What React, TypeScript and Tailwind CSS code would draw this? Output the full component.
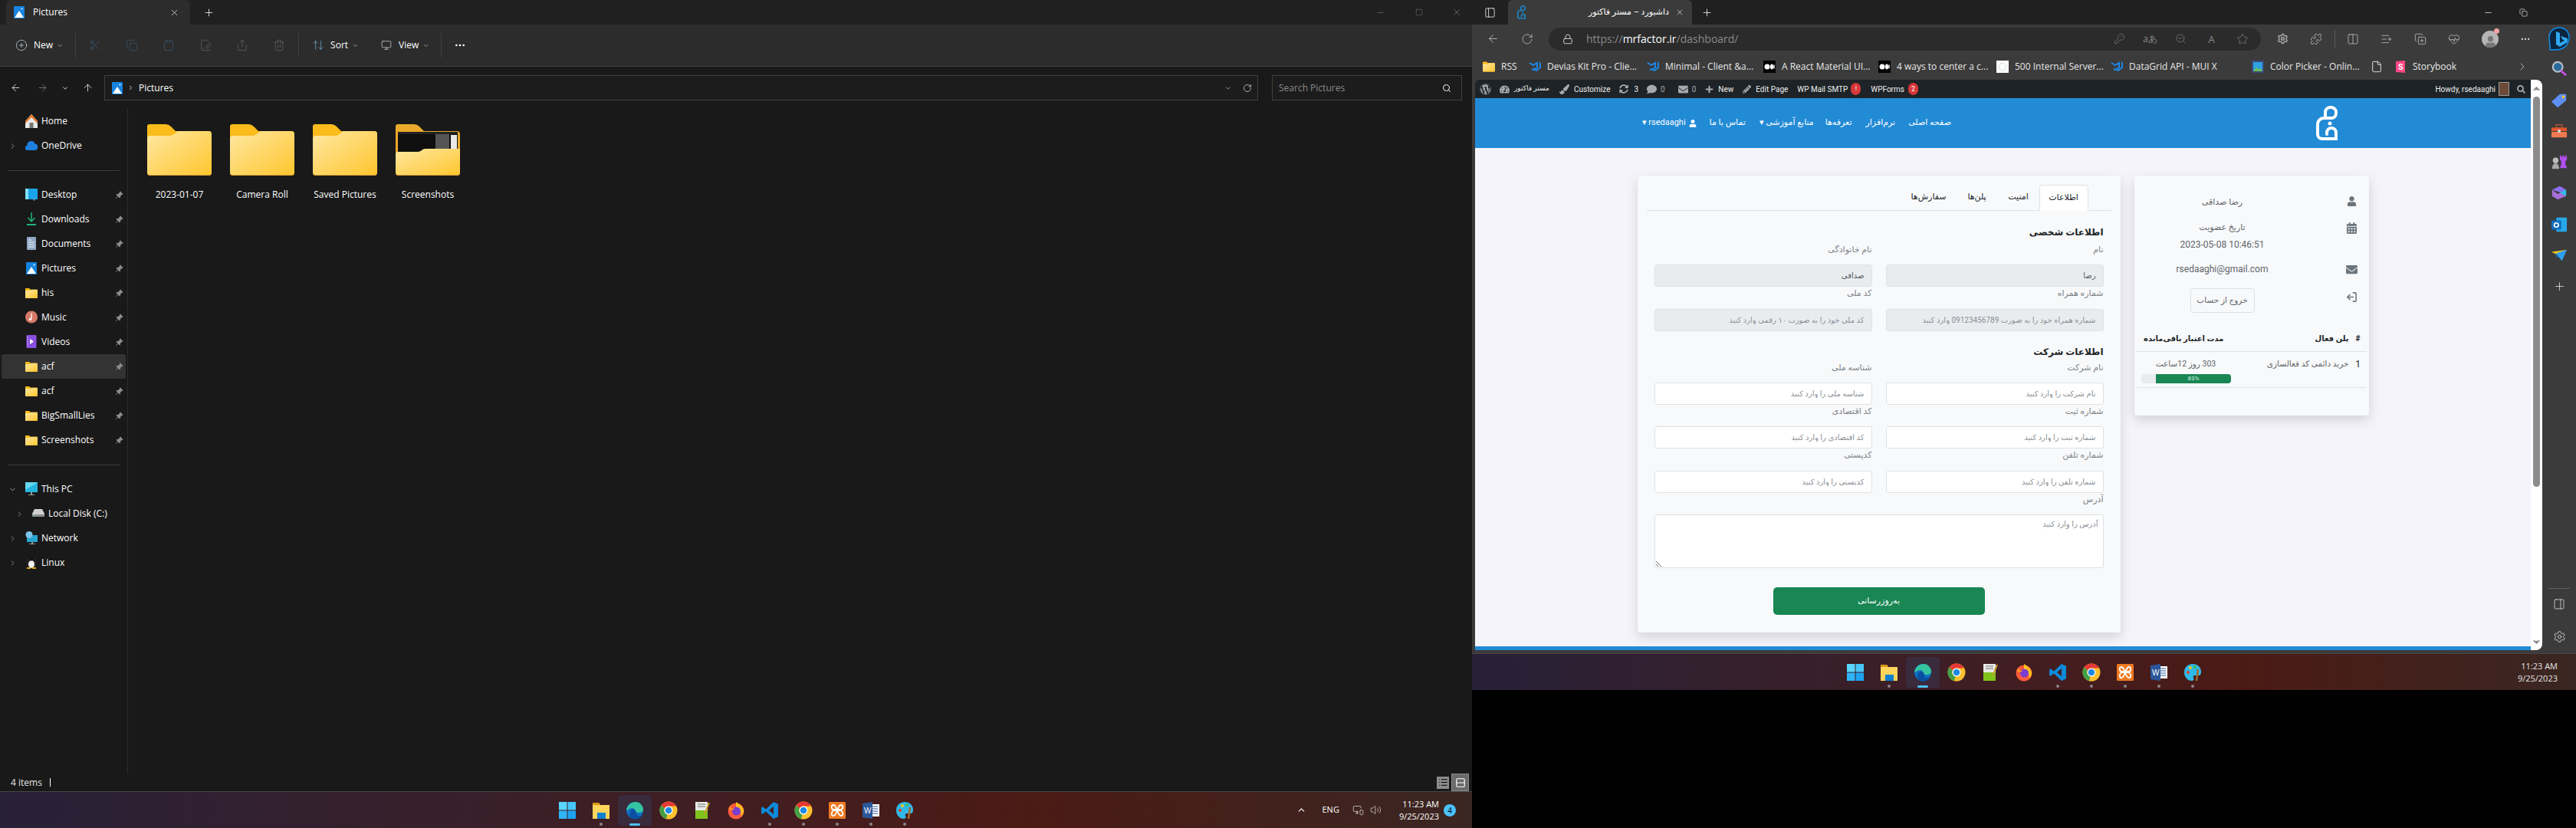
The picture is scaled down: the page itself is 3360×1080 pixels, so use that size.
import type { ReactNode } from "react";
import {
  ArrowLeft, ArrowRight, ArrowUp, ArrowUpDown, ChevronDown, ChevronRight, ChevronUp, Clipboard, Copy,
  FilePenLine, Lock, LogOut, Minus, MoreHorizontal, Plus, RotateCw, Scissors, Search, Settings, Share, Square, Star,
  Trash2, X, KeyRound, ZoomOut, Puzzle, Columns2, ListPlus, CopyPlus, HeartPulse, Volume2, MonitorSmartphone, File,
  PanelRight, Monitor, CirclePlus, List, Rows2,
} from "lucide-react";
import { BsPinAngleFill } from "react-icons/bs";
import {
  FaCalendarAlt, FaComment, FaEnvelope, FaPaintBrush, FaPencilAlt, FaPlus, FaSearch, FaSyncAlt, FaTachometerAlt,
  FaUser, FaWordpress,
} from "react-icons/fa";

const seg = "font-['Open_Sans','Noto_Sans',sans-serif]";
const fa = "font-['Roboto','DejaVu_Sans',sans-serif]";

function Folder({ className = "", preview = false }: { className?: string; preview?: boolean }) {
  return (
    <svg viewBox="0 0 84 67" className={className}>
      <defs>
        <linearGradient id="fold" x1="0" y1="0" x2="1" y2="1">
          <stop offset="0" stopColor="#ffe8a3" />
          <stop offset="1" stopColor="#ffc62e" />
        </linearGradient>
      </defs>
      <path d="M3 0H24q4 0 7 3l6 6H80q4 0 4 4V63q0 4-4 4H4q-4 0-4-4V3q0-3 3-3z" fill={preview ? "#e9a92a" : "#fbbb1a"} />
      <path d="M0 63h84q0 4-4 4H4q-4 0-4-4z" fill="#dfa43a" />
      {preview ? (
        <>
          <rect x="3" y="12" width="78" height="30" fill="#0f0f0f" />
          <rect x="52" y="12" width="18" height="30" fill="#555" />
          <rect x="72" y="14" width="8" height="28" fill="#e9e9e9" />
          <rect x="3" y="10" width="78" height="3" fill="#222" />
          <path d="M0 39q0-3 4-3H29q3 0 5-2t5-2H84V62q0 4-4 4H4q-4 0-4-4z" fill="url(#fold)" />
        </>
      ) : (
        <path d="M0 19q0-4 4-4H30q3 0 6-3t5-3H80q4 0 4 4V62q0 4-4 4H4q-4 0-4-4z" fill="url(#fold)" />
      )}
    </svg>
  );
}

function PicturesIcon({ className = "" }: { className?: string }) {
  return (
    <svg viewBox="0 0 14 16" className={className}>
      <rect width="14" height="16" rx="1" fill="#1583e0" />
      <circle cx="10.5" cy="3.5" r="1" fill="#fff" />
      <path d="M1 15 7 6l6 9z" fill="#fff" />
    </svg>
  );
}

function SideIcon({ name }: { name: string }) {
  if (name === "folder") return <Folder className="w-[16px] h-[13px]" />;
  if (name === "pictures") return <PicturesIcon className="w-[14px] h-[16px]" />;
  const paths: Record<string, ReactNode> = {
    home: (
      <>
        <path d="M8 0 0 9v9h16V9z" fill="#e8e8e8" />
        <path d="M8 0 0 9v3l8-8 8 8V9z" fill="#e2762b" />
        <rect x="5.5" y="11" width="5" height="7" fill="#777" />
      </>
    ),
    onedrive: <path d="M3 15a3 3 0 0 1-.5-6A5 5 0 0 1 8 3a4.500 4.500 0 0 1 4.500 3.500A4.300 4.300 0 0 1 13 15z" fill="#1d7fe0" />,
    desktop: (
      <>
        <rect x="0" y="1" width="16" height="14" fill="#1aa4e8" />
        <rect x="0" y="1" width="4" height="14" fill="#7fe0f5" />
        <rect x="10" y="15" width="3" height="1.500" fill="#777" />
      </>
    ),
    downloads: (
      <>
        <path d="M8 0v11M3.500 7 8 12l4.500-5" fill="none" stroke="#1fb57a" strokeWidth="1.500" />
        <rect x="2" y="15" width="12" height="2" fill="#1fb57a" />
      </>
    ),
    documents: (
      <>
        <rect x="2" y="0" width="12" height="17" rx="1" fill="#8fa9c4" />
        <path d="M4 4h4M4 7h8M4 10h8M4 13h8" stroke="#eef3f8" strokeWidth="1" />
      </>
    ),
    music: (
      <>
        <circle cx="8" cy="8.500" r="8" fill="#d67b68" />
        <path d="M8 3.500V11" stroke="#fff" strokeWidth="1.300" />
        <circle cx="6.500" cy="11.500" r="1.700" fill="#fff" />
      </>
    ),
    videos: (
      <>
        <rect x="1.500" y="0" width="13" height="17" rx="1" fill="#8a4fe0" />
        <path d="M6 5v7l5-3.500z" fill="#fff" />
        <path d="M3 2v13" stroke="#c9a8f5" strokeWidth="1.500" strokeDasharray="1.500 1.500" />
      </>
    ),
    pc: (
      <>
        <rect x="0" y="0" width="16" height="13" fill="#27b4dc" />
        <path d="M0 0h16L0 10z" fill="#65d8ee" />
        <rect x="7" y="13" width="2" height="3" fill="#999" />
        <rect x="4" y="16" width="8" height="1" fill="#999" />
      </>
    ),
    disk: (
      <>
        <path d="M3 3h10l3 6v4H0V9z" fill="#cfcfcf" />
        <path d="M0 10h16v3H0z" fill="#8f8f8f" />
        <rect x="2" y="11" width="2" height="1" fill="#5be07a" />
      </>
    ),
    network: (
      <>
        <rect x="2" y="5" width="14" height="9" fill="#27a4d0" />
        <circle cx="5" cy="4.500" r="4.500" fill="#7cc4e8" />
        <rect x="8" y="14" width="2" height="2" fill="#999" />
        <rect x="5" y="16" width="8" height="1" fill="#999" />
      </>
    ),
    linux: (
      <>
        <ellipse cx="8" cy="9" rx="5.500" ry="7" fill="#171717" stroke="#444" strokeWidth=".5" />
        <ellipse cx="8" cy="11" rx="4" ry="5" fill="#f2f2f2" />
        <circle cx="8" cy="3.500" r="3" fill="#171717" />
        <path d="M2 15h5v2H2zM9 15h5v2H9z" fill="#e2a21a" />
      </>
    ),
  };
  return <svg viewBox="0 0 16 18" className="w-[16px] h-[18px]">{paths[name]}</svg>;
}

function NavRow({ icon, label, pinned, arrow, deep, active }: { icon: string; label: string; pinned?: boolean; arrow?: "right" | "down"; deep?: boolean; active?: boolean }) {
  return (
    <div className={`h-[32px] flex items-center ml-[2px] w-[162px] rounded-[3px] relative ${active ? "bg-[#333333]" : ""}`}>
      <div className={`w-[14px] flex justify-center shrink-0 ${deep ? "ml-[16px]" : "ml-[7px]"}`}>
        {arrow === "right" && <ChevronRight size={11} className="text-[#8c8c8c]" />}
        {arrow === "down" && <ChevronDown size={11} className="text-[#aaaaaa]" />}
      </div>
      <div className="w-[16px] flex justify-center shrink-0 ml-[10px]"><SideIcon name={icon} /></div>
      <span className="ml-[5px] text-[12px] text-white whitespace-nowrap">{label}</span>
      {pinned && <BsPinAngleFill size={11} className="absolute right-[3px] top-[11px] text-[#8d8d8d]" />}
    </div>
  );
}

function Explorer() {
  const disabled = [Scissors, Copy, Clipboard, FilePenLine, Share, Trash2];
  return (
    <div className={`flex-1 flex flex-col bg-[#191919] ${seg}`}>
      <div className="h-[32px] bg-[#202020] flex items-end text-white">
        <div className="ml-[8px] w-[240px] h-[32px] bg-[#2c2c2c] rounded-t-[6px] flex items-center">
          <PicturesIcon className="ml-[10px] w-[14px] h-[16px]" />
          <span className="ml-[11px] text-[12px]">Pictures</span>
          <X size={13} strokeWidth={1.25} className="ml-auto mr-[14px]" />
        </div>
        <div className="w-[48px] h-[32px] flex items-center justify-center"><Plus size={15} strokeWidth={1.25} /></div>
        <div className="ml-auto h-[32px] flex items-center text-[#777777]">
          <div className="w-[50px] flex justify-center"><Minus size={13} strokeWidth={1.25} /></div>
          <div className="w-[52px] flex justify-center"><Square size={10} strokeWidth={1.25} /></div>
          <div className="w-[46px] flex justify-center mr-[-3px]"><X size={14} strokeWidth={1.25} /></div>
        </div>
      </div>
      <div className="h-[55px] bg-[#2c2c2c] border-b border-[#424242] flex items-center text-white text-[12px]">
        <CirclePlus size={16} strokeWidth={1} className="ml-[20px] text-[#d8e8f5]" />
        <span className="ml-[8px]">New</span>
        <ChevronDown size={9} className="ml-[5px] text-[#bbbbbb]" />
        <div className="ml-[15px] w-px h-[32px] bg-[#404040]" />
        <div className="flex ml-[1px]">
          {disabled.map((Icon, i) => (
            <div key={i} className="w-[48px] flex justify-center"><Icon size={16} strokeWidth={1} className={i < 3 ? "text-[#3f5f78]" : "text-[#666c70]"} /></div>
          ))}
        </div>
        <div className="ml-[1px] w-px h-[32px] bg-[#404040]" />
        <ArrowUpDown size={16} strokeWidth={1} className="ml-[17px] text-[#7cc4f0]" />
        <span className="ml-[8px]">Sort</span>
        <ChevronDown size={9} className="ml-[5px] text-[#bbbbbb]" />
        <Monitor size={14} strokeWidth={1} className="ml-[29px]" />
        <span className="ml-[9px]">View</span>
        <ChevronDown size={9} className="ml-[5px] text-[#bbbbbb]" />
        <div className="ml-[15px] w-px h-[32px] bg-[#404040]" />
        <MoreHorizontal size={16} className="ml-[16px]" />
      </div>
      <div className="h-[55px] flex items-center text-white">
        <ArrowLeft size={15} strokeWidth={1.25} className="ml-[13px]" />
        <ArrowRight size={15} strokeWidth={1.25} className="ml-[20px] text-[#8a8a8a]" />
        <ChevronDown size={10} className="ml-[17px]" />
        <ArrowUp size={15} strokeWidth={1.25} className="ml-[17px]" />
        <div className="ml-[14px] w-[1505px] h-[33px] border border-[#3f3f3f] bg-[#1c1c1c] flex items-center text-[12px]">
          <PicturesIcon className="ml-[9px] w-[14px] h-[16px]" />
          <ChevronRight size={9} className="ml-[6px]" />
          <span className="ml-[6px]">Pictures</span>
          <ChevronDown size={10} className="ml-auto mr-[14px] text-[#aaaaaa]" />
          <RotateCw size={12} strokeWidth={1.25} className="mr-[7px]" />
        </div>
        <div className="ml-[18px] w-[248px] h-[33px] border border-[#3f3f3f] bg-[#1c1c1c] flex items-center text-[12px] text-[#8a8a8a]">
          <span className="ml-[8px]">Search Pictures</span>
          <Search size={12} className="ml-auto mr-[13px] text-white" />
        </div>
      </div>
      <div className="flex-1 flex min-h-0">
        <div className="w-[167px] border-r border-[#2c2c2c]">
          <NavRow icon="home" label="Home" />
          <NavRow icon="onedrive" label="OneDrive" arrow="right" />
          <div className="h-[32px] flex items-center"><div className="ml-[10px] w-[146px] h-px bg-[#3a3a3a]" /></div>
          <NavRow icon="desktop" label="Desktop" pinned />
          <NavRow icon="downloads" label="Downloads" pinned />
          <NavRow icon="documents" label="Documents" pinned />
          <NavRow icon="pictures" label="Pictures" pinned />
          <NavRow icon="folder" label="his" pinned />
          <NavRow icon="music" label="Music" pinned />
          <NavRow icon="videos" label="Videos" pinned />
          <NavRow icon="folder" label="acf" pinned active />
          <NavRow icon="folder" label="acf" pinned />
          <NavRow icon="folder" label="BigSmallLies" pinned />
          <NavRow icon="folder" label="Screenshots" pinned />
          <div className="h-[32px] flex items-center"><div className="ml-[10px] w-[146px] h-px bg-[#3a3a3a]" /></div>
          <NavRow icon="pc" label="This PC" arrow="down" />
          <NavRow icon="disk" label="Local Disk (C:)" arrow="right" deep />
          <NavRow icon="network" label="Network" arrow="right" />
          <NavRow icon="linux" label="Linux" arrow="right" />
        </div>
        <div className="flex-1 pt-[20px] pl-[13px] flex items-start">
          {["2023-01-07", "Camera Roll", "Saved Pictures", "Screenshots"].map((name, i) => (
            <div key={name} className="w-[108px] flex flex-col items-center">
              <Folder className="w-[84px] h-[67px]" preview={i === 3} />
              <span className="mt-[16px] text-[12px] leading-[18px] text-white whitespace-nowrap">{name}</span>
            </div>
          ))}
        </div>
      </div>
      <div className="h-[23px] flex items-center text-[12px] text-[#e4e4e4]">
        <span className="ml-[14px]">4 items</span>
        <div className="ml-[10px] w-px h-[11px] bg-white" />
        <div className="ml-auto w-[16px] h-[16px] bg-[#8c8c8c] flex items-center justify-center text-black"><List size={13} /></div>
        <div className="ml-[3px] mr-[4px] w-[23px] h-[23px] bg-[#6a6a6a] border border-[#8c8c8c] flex items-center justify-center text-white"><Rows2 size={14} /></div>
      </div>
    </div>
  );
}

function TaskIcon({ name }: { name: string }) {
  const g: Record<string, ReactNode> = {
    windows: (
      <>
        <rect x="1" y="1" width="10.500" height="10.500" fill="#5ad5fb" />
        <rect x="12.500" y="1" width="10.500" height="10.500" fill="#46c6f8" />
        <rect x="1" y="12.500" width="10.500" height="10.500" fill="#2fb5f5" />
        <rect x="12.500" y="12.500" width="10.500" height="10.500" fill="#1ea3f0" />
      </>
    ),
    folder: (
      <>
        <path d="M1 2h8l2 3h12v18H1z" fill="#ffd55c" />
        <path d="M1 2h8l2 3H1z" fill="#d99a14" />
        <rect x="7" y="15" width="11" height="8" fill="#0f7fd0" />
      </>
    ),
    edge: (
      <>
        <circle cx="12" cy="12" r="11" fill="#0f6fc0" />
        <path d="M1 12C2 4 9 1 13 1c6 0 10 5 10 10 0 3-3 4-6 4-4 0-5-2-5-3 0-3-4-4-7-2-2 1-3 2-4 2z" fill="#35c4a0" />
        <path d="M8 23c-4-3-4-10 1-12 4-1 5 3 5 5 0 4 5 4 8 2-3 5-9 7-14 5z" fill="#0a4fa0" />
      </>
    ),
    chrome: (
      <>
        <circle cx="12" cy="12" r="11.500" fill="#fbc02d" />
        <path d="M12 .5A11.500 11.500 0 0 1 22 6.500H12a5.500 5.500 0 0 0-5 3L2.500 5.500A11.500 11.500 0 0 1 12 .5z" fill="#e53935" />
        <path d="M2.500 5.500 7 9.500a5.500 5.500 0 0 0 3.500 8L9 23A11.500 11.500 0 0 1 2.500 5.500z" fill="#43a047" />
        <circle cx="12" cy="12" r="5.500" fill="#fff" />
        <circle cx="12" cy="12" r="4.300" fill="#1e88e5" />
      </>
    ),
    notepad: (
      <>
        <rect x="3" y="1" width="16" height="22" fill="#e8e8e8" />
        <rect x="3" y="12" width="16" height="11" fill="#7fc31c" />
        <path d="M6 4h10M6 7h10" stroke="#777" strokeWidth="1" />
        <path d="M15 17 21 2" stroke="#c8a028" strokeWidth="2" />
      </>
    ),
    firefox: (
      <>
        <circle cx="12" cy="13" r="10.500" fill="#ff5a3c" />
        <path d="M12 1c5 3 10 7 10 12 0 3-2 6-4 7 2-5-1-10-6-12z" fill="#ffc21e" />
        <circle cx="12.500" cy="13" r="5.500" fill="#7a3fd0" />
        <path d="M4 6c1 3 3 4 6 4-2 2-6 2-7 0z" fill="#ff9a1e" />
      </>
    ),
    vscode: <path fillRule="evenodd" d="M17 1l6 2.800v16.400L17 23 7 13.500 2.800 16.700 1 15.800V8.200l1.800-.9L7 10.500zM17 7l-6 5 6 5z" fill="#0e8ad8" />,
    xampp: (
      <>
        <rect x="1" y="1" width="22" height="22" rx="1.500" fill="#ee7a22" />
        <path d="M7 5c-3 0-3 5 0 6h10c3-1 3-6 0-6s-4 5-5 7-2 7-5 7-3-5 0-7h10c3 2 3 7 0 7s-4-5-5-7-2-7-5-7z" fill="none" stroke="#fff" strokeWidth="1.800" />
      </>
    ),
    word: (
      <>
        <rect x="9" y="4" width="14" height="16" fill="#fff" />
        <path d="M12 7h9M12 10h9M12 13h9M12 16h9" stroke="#2b579a" strokeWidth="1.200" />
        <path d="M1 3 14 1v22L1 21z" fill="#2b579a" />
        <text x="3" y="15.500" fontSize="10" fill="#fff" fontFamily="Liberation Sans">W</text>
      </>
    ),
    paint: (
      <>
        <path d="M12 1C5 1 1 6 1 12s4 11 10 11c3 0 3-3 2-4s0-3 2-3h5c2 0 3-2 3-5C23 5 18 1 12 1z" fill="#2fb8e8" />
        <circle cx="6" cy="12" r="2" fill="#e0402a" />
        <circle cx="9" cy="6" r="2" fill="#f5c518" />
        <circle cx="15" cy="5" r="2" fill="#3dbb5a" />
        <path d="M19 8l-2 15" stroke="#a5682a" strokeWidth="2.500" />
      </>
    ),
  };
  return <svg viewBox="0 0 24 24" className="w-[24px] h-[24px]">{g[name]}</svg>;
}

function Taskbar({ children, pad }: { children?: ReactNode; pad: string }) {
  const apps = ["windows", "folder", "edge", "chrome", "notepad", "firefox", "vscode", "chrome", "xampp", "word", "paint"];
  const dots = [1, 6, 7, 8, 9, 10];
  return (
    <div className={`h-[48px] shrink-0 flex items-center border-t border-[#4a4446] bg-linear-to-r from-[#282037] via-[#4b1a15] via-70% to-[#3a2622] ${seg}`}>
      <div className={`flex ${pad}`}>
        {apps.map((a, i) => (
          <div key={i} className={`w-[44px] h-[40px] relative flex items-center justify-center ${a === "edge" ? "bg-[#392a3c] rounded-[4px]" : ""}`}>
            <TaskIcon name={a} />
            {dots.includes(i) && <div className="absolute bottom-[0px] w-[4px] h-[4px] rounded-full bg-[#8d8488]" />}
            {a === "edge" && <div className="absolute bottom-[0px] w-[14px] h-[3px] rounded-full bg-[#4cc2ff]" />}
          </div>
        ))}
      </div>
      {children}
    </div>
  );
}

function Bing() {
  return (
    <svg viewBox="0 0 30 34" className="w-[30px] h-[34px]">
      <path d="M15 2C7 2 2 8 2 15c0 6 2 11 1 16 6 0 12 0 14-1 7-2 11-8 11-15C28 8 23 2 15 2z" fill="#0b2440" stroke="#0d8fe8" strokeWidth="1.500" />
      <path d="M11 7l5 2v13l6-3-3-2-2-4 9 3v5l-10 6-5-3z" fill="#2fa8f0" />
    </svg>
  );
}

function RailIcon({ name }: { name: string }) {
  const g: Record<string, ReactNode> = {
    search: (
      <>
        <circle cx="10" cy="9" r="7" fill="#2a6a9a" stroke="#b5bcc4" strokeWidth="2.500" />
        <path d="M15 15l6 5" stroke="#c84fe8" strokeWidth="3" strokeLinecap="round" />
      </>
    ),
    tag: (
      <>
        <path d="M1 14 13 3h9v9L10 22z" fill="#5f8ff5" />
        <circle cx="18" cy="7" r="2" fill="#f5c518" />
      </>
    ),
    tools: (
      <>
        <rect x="8" y="3" width="8" height="5" fill="none" stroke="#b9583a" strokeWidth="1.500" />
        <rect x="1" y="7" width="22" height="5" fill="#e2542e" />
        <rect x="1" y="13" width="22" height="8" rx="1" fill="#ef7a50" />
        <rect x="10" y="10" width="4" height="4" fill="#d9d9d9" />
      </>
    ),
    chess: (
      <>
        <circle cx="7" cy="9" r="4" fill="#bdbdbd" />
        <path d="M2 21c0-5 2-8 5-8s5 3 5 8z" fill="#a8a8a8" />
        <path d="M13 2h2v2h2V2h2v2h2V2h2v6l-2 2v5l2 4v1H13v-1l2-4v-5l-2-2z" fill="#b34ff0" />
      </>
    ),
    office: (
      <>
        <path d="M2 7 13 2l9 5-8 4z" fill="#8a6ff0" />
        <path d="M2 7v9l8 5 12-5-8-5-4 2z" fill="#a86fd8" />
        <path d="M22 7v9l-9-5z" fill="#2fc0e8" />
      </>
    ),
    outlook: (
      <>
        <rect x="8" y="2" width="15" height="20" rx="1" fill="#28a8ea" />
        <rect x="1" y="6" width="14" height="13" rx="1" fill="#0f6cbd" />
        <circle cx="8" cy="12.500" r="3" fill="none" stroke="#fff" strokeWidth="1.800" />
      </>
    ),
    send: (
      <>
        <path d="M1 7 23 4 11 12z" fill="#f5c518" />
        <path d="M8 9 23 4 16 20 11 14z" fill="#2f9ff0" />
        <path d="M6 9l3 7 2-3z" fill="#0f6cbd" />
      </>
    ),
  };
  return <svg viewBox="0 0 24 24" className="w-[22px] h-[22px]">{g[name]}</svg>;
}

function Logo({ className = "", color = "white" }: { className?: string; color?: string }) {
  return (
    <svg viewBox="0 0 28 45" className={className} fill="none" stroke={color} strokeWidth="4" strokeLinecap="round">
      <path d="M12 16V8a7 6 0 0 1 14 0v2a6 6 0 0 1-6 6H10a8 8 0 0 0-8 8V37a6 6 0 0 0 6 6H26V35a6 6 0 0 0-6-6 6 6 0 0 0-6 6v2" />
      <circle cx="18" cy="23" r="2.500" fill={color} stroke="none" />
    </svg>
  );
}

const bookmarks = [
  { w: "w-[60px]", icon: "folder", label: "RSS" },
  { w: "w-[154px]", icon: "mui", label: "Devias Kit Pro - Clie..." },
  { w: "w-[152px]", icon: "mui", label: "Minimal - Client &a..." },
  { w: "w-[150px]", icon: "medium", label: "A React Material UI..." },
  { w: "w-[154px]", icon: "medium", label: "4 ways to center a c..." },
  { w: "w-[149px]", icon: "dots", label: "500 Internal Server..." },
  { w: "w-[184px]", icon: "mui", label: "DataGrid API - MUI X" },
  { w: "w-[155px]", icon: "color", label: "Color Picker - Onlin..." },
  { w: "w-[31px]", icon: "doc", label: "" },
  { w: "w-[150px]", icon: "story", label: "Storybook" },
];

function BookmarkIcon({ icon }: { icon: string }) {
  if (icon === "folder") return <Folder className="w-[16px] h-[14px]" />;
  if (icon === "doc") return <File size={16} strokeWidth={1.25} className="text-white" />;
  const g: Record<string, ReactNode> = {
    mui: <path d="M1 3l5 3 5-3v6l-5 3-2-1M15 3v6l-5 4-3-2M14 2h1" fill="none" stroke="#1e88e5" strokeWidth="2" />,
    medium: (
      <>
        <rect width="16" height="16" fill="#000" />
        <circle cx="5" cy="8" r="3.500" fill="#fff" />
        <ellipse cx="11" cy="8" rx="2" ry="3.500" fill="#fff" />
        <ellipse cx="14" cy="8" rx=".8" ry="3" fill="#fff" />
      </>
    ),
    dots: (
      <>
        <rect width="16" height="16" fill="#fff" />
        <circle cx="8" cy="8" r="4.500" fill="none" stroke="#b5c4c8" strokeWidth="1.500" strokeDasharray="1 1.500" />
      </>
    ),
    color: (
      <>
        <rect width="16" height="16" fill="#3b4a78" />
        <rect x="2" y="2" width="12" height="12" fill="#2fa0e0" />
        <path d="M2 14l4-5 3 3 2-2 3 4z" fill="#6fc04a" />
      </>
    ),
    story: (
      <>
        <path d="M2 1 14 0v16L2 15z" fill="#ff4785" />
        <text x="5" y="12" fontSize="10" fontWeight="700" fill="#fff" fontFamily="Liberation Sans">S</text>
      </>
    ),
  };
  return <svg viewBox="0 0 16 16" className="w-[16px] h-[16px]">{g[icon]}</svg>;
}

function Field({ label, placeholder, value, disabled }: { label: string; placeholder?: string; value?: string; disabled?: boolean }) {
  return (
    <div>
      <label className="block h-[18.33px] mb-[10px] text-[11px] leading-[18px] text-[#7d8389]">{label}</label>
      <input
        readOnly
        disabled={disabled}
        defaultValue={value}
        placeholder={placeholder}
        className={`block w-full h-[29px] px-[9px] rounded-[3px] border border-[#dee2e6] text-[10px] text-[#555b61] placeholder:text-[#8b9096] outline-none ${disabled ? "bg-[#e9ecef]" : "bg-white"}`}
      />
    </div>
  );
}

function InfoRow({ icon, children, className = "" }: { icon: ReactNode; children: ReactNode; className?: string }) {
  return (
    <div className={`flex ${className}`} dir="rtl">
      <div className="w-[44px] flex justify-center pt-[4px] shrink-0 text-[#6c757d]">{icon}</div>
      <div className="mr-[41px] w-[212px] text-center text-[12px] leading-[22px] text-[#5f656b]">{children}</div>
    </div>
  );
}

function Dashboard() {
  return (
    <div className={`flex-1 bg-[#f4f4fa] flex justify-center pt-[36px] gap-[18px] ${fa}`} dir="rtl">
      <div className="w-[306px] h-[313px] bg-[#f8f9fa] rounded-[4px] shadow-[0_6px_16px_rgba(0,0,0,0.14)]">
        <InfoRow className="mt-[23px]" icon={<FaUser size={13} />}><span className="text-[11px]">رضا صداقی</span></InfoRow>
        <InfoRow className="mt-[11px]" icon={<FaCalendarAlt size={15} />}>
          <div className="text-[11px]">تاریخ عضویت</div>
          <div dir="ltr">2023-05-08 10:46:51</div>
        </InfoRow>
        <InfoRow className="mt-[10px]" icon={<FaEnvelope size={15} />}><span>rsedaaghi@gmail.com</span></InfoRow>
        <InfoRow className="mt-[14px]" icon={<LogOut size={15} strokeWidth={2.5} className="-scale-x-100" />}>
          <button className="w-[84px] h-[32px] bg-transparent border border-[#dcdfe3] rounded-[4px] text-[10.5px] text-[#5f656b]">خروج از حساب</button>
        </InfoRow>
        <div className="mx-[3px] mt-[24px] h-[27px] flex items-start border-b border-[#dee2e6] text-[10px] font-bold text-[#212529]">
          <div className="w-[22px] text-center leading-[20px]">#</div>
          <div className="w-[155px] leading-[20px] pr-[1px]">پلن فعال</div>
          <div className="leading-[20px] pr-[9px] whitespace-nowrap">مدت اعتبار باقی‌مانده</div>
        </div>
        <div className="mx-[3px] h-[47px] flex items-start border-b border-[#dee2e6] text-[10.5px] text-[#5f656b]">
          <div className="w-[22px] mt-[6px] text-center leading-[20px] text-[12px] text-[#212529]">1</div>
          <div className="w-[155px] mt-[6px] leading-[20px] pr-[1px] whitespace-nowrap">خرید دائمی کد فعالسازی</div>
          <div className="w-[123px] mt-[6px] pl-[6px]">
            <div className="text-center leading-[20px] whitespace-nowrap">303 روز 12ساعت</div>
            <div className="mt-[3px] h-[12px] rounded-[4px] bg-[#e9ecef] overflow-hidden">
              <div className="w-[83%] h-full bg-[#198754] text-center text-[8px] leading-[12px] text-[#d8f5e6]">83%</div>
            </div>
          </div>
        </div>
      </div>

      <div className="w-[630px] h-[596px] bg-[#f8f9fa] rounded-[4px] shadow-[0_6px_16px_rgba(0,0,0,0.14)] px-[12px] pt-[12px]">
        <div className="h-[34px] flex items-end border-b border-[#dee2e6] text-[11px] text-[#212529]">
          <div className="mr-[30px] w-[64px] h-[34px] mb-[-1px] bg-white border border-[#dee2e6] border-b-white rounded-t-[4px] flex items-center justify-center">اطلاعات</div>
          <div className="w-[54px] h-[34px] flex items-center justify-center">امنیت</div>
          <div className="w-[54px] h-[34px] flex items-center justify-center">پلن‌ها</div>
          <div className="w-[72px] h-[34px] flex items-center justify-center">سفارش‌ها</div>
        </div>
        <div className="px-[10px]">
          <h3 className="mt-[18px] h-[20px] mb-[4px] text-[12px] font-bold leading-[20px] text-[#212529]">اطلاعات شخصی</h3>
          <div className="grid grid-cols-2 gap-x-[18px]">
            <Field label="نام" value="رضا" disabled />
            <Field label="نام خانوادگی" value="صداقی" disabled />
            <Field label="شماره همراه" placeholder="شماره همراه خود را به صورت 09123456789 وارد کنید" disabled />
            <Field label="کد ملی" placeholder="کد ملی خود را به صورت ۱۰ رقمی وارد کنید" disabled />
          </div>
          <h3 className="mt-[17px] h-[20px] mb-[2px] text-[12px] font-bold leading-[20px] text-[#212529]">اطلاعات شرکت</h3>
          <div className="grid grid-cols-2 gap-x-[18px]">
            <Field label="نام شرکت" placeholder="نام شرکت را وارد کنید" />
            <Field label="شناسه ملی" placeholder="شناسه ملی را وارد کنید" />
            <Field label="شماره ثبت" placeholder="شماره ثبت را وارد کنید" />
            <Field label="کد اقتصادی" placeholder="کد اقتصادی را وارد کنید" />
            <Field label="شماره تلفن" placeholder="شماره تلفن را وارد کنید" />
            <Field label="کدپستی" placeholder="کدپستی را وارد کنید" />
          </div>
          <label className="block h-[18.33px] mb-[10px] text-[11px] leading-[18px] text-[#7d8389]">آدرس</label>
          <textarea readOnly placeholder="آدرس را وارد کنید" className="block w-full h-[70px] px-[6px] py-[4px] rounded-[3px] border border-[#dee2e6] bg-white text-[10px] placeholder:text-[#8b9096] outline-none" />
          <div className="mt-[25px] flex justify-center">
            <button className="w-[276px] h-[36px] rounded-[5px] bg-[#198754] text-[11px] text-white">به‌روزرسانی</button>
          </div>
        </div>
      </div>
    </div>
  );
}

function Browser() {
  return (
    <div className={`h-[852px] flex flex-col bg-[#3b3b3b] ${seg}`}>
      <div className="h-[32px] bg-[#202020] flex items-end text-white shrink-0">
        <div className="w-[47px] h-[32px] flex items-center justify-center"><PanelRight size={15} strokeWidth={1.25} className="-scale-x-100" /></div>
        <div className="w-[240px] h-[32px] bg-[#3b3b3b] rounded-t-[6px] flex items-center">
          <Logo className="ml-[12px] w-[11px] h-[18px]" color="#1c87c9" />
          <span className={`ml-auto text-[11px] whitespace-nowrap ${fa}`} dir="rtl">داشبورد – مستر فاکتور</span>
          <X size={12} strokeWidth={1.25} className="ml-[8px] mr-[10px]" />
        </div>
        <div className="w-[38px] h-[32px] flex items-center justify-center"><Plus size={15} strokeWidth={1.25} /></div>
        <div className="ml-auto h-[32px] flex items-center">
          <div className="w-[46px] flex justify-center"><Minus size={13} strokeWidth={1.25} /></div>
          <div className="w-[46px] flex justify-center"><Copy size={11} strokeWidth={1.25} /></div>
          <div className="w-[46px] flex justify-center"><X size={15} strokeWidth={1.25} /></div>
        </div>
      </div>
      <div className="flex-1 flex min-h-0">
        <div className="w-[1396px] flex flex-col">
          <div className="h-[37px] flex items-center text-[#dcdcdc] shrink-0">
            <div className="ml-[6px] w-[44px] flex justify-center"><ArrowLeft size={17} strokeWidth={1} /></div>
            <div className="w-[44px] flex justify-center"><RotateCw size={16} strokeWidth={1} /></div>
            <div className="ml-[6px] w-[930px] h-[30px] rounded-full bg-[#2b2b2b] flex items-center">
              <Lock size={14} strokeWidth={1.25} className="ml-[18px] text-white" />
              <span className="ml-[17px] text-[14px] text-[#8a8a8a] whitespace-nowrap">https://<span className="text-white">mrfactor.ir</span>/dashboard/</span>
              <div className="ml-auto mr-[4px] flex text-[#8a8a8a]">
                <div className="w-[40px] flex justify-center"><KeyRound size={15} strokeWidth={1} /></div>
                <div className="w-[40px] text-center text-[12px] leading-[16px]">aあ</div>
                <div className="w-[40px] flex justify-center"><ZoomOut size={15} strokeWidth={1} /></div>
                <div className="w-[40px] text-center text-[13px] leading-[16px]">A</div>
                <div className="w-[40px] flex justify-center"><Star size={16} strokeWidth={1} /></div>
              </div>
            </div>
            <div className="ml-[7px] w-[44px] flex justify-center"><Settings size={15} className="text-[#bdbdbd]" /></div>
            <div className="w-[44px] flex justify-center"><Puzzle size={16} strokeWidth={1} /></div>
            <div className="ml-[2px] w-px h-[22px] bg-[#5a5a5a]" />
            <div className="ml-[1px] w-[44px] flex justify-center"><Columns2 size={16} strokeWidth={1} /></div>
            <div className="w-[44px] flex justify-center"><ListPlus size={16} strokeWidth={1} /></div>
            <div className="w-[44px] flex justify-center"><CopyPlus size={16} strokeWidth={1} /></div>
            <div className="w-[44px] flex justify-center"><HeartPulse size={16} strokeWidth={1} /></div>
            <div className="ml-[3px] w-[44px] flex justify-center relative">
              <div className="w-[22px] h-[22px] rounded-full bg-[#b5b5b5] flex items-end justify-center overflow-hidden"><FaUser size={15} className="text-[#767676]" /></div>
              <div className="absolute top-[-3px] right-[10px] w-[7px] h-[7px] rounded-full bg-[#f4a3a3]" />
            </div>
            <div className="ml-[2px] w-[44px] flex justify-center"><MoreHorizontal size={14} /></div>
          </div>
          <div className="h-[35px] flex items-center text-[12px] text-[#e8e8e8] shrink-0 pl-[14px] relative">
            {bookmarks.map((b, i) => (
              <div key={i} className={`${b.w} flex items-center shrink-0`}>
                <BookmarkIcon icon={b.icon} />
                {b.label && <span className="ml-[8px] whitespace-nowrap">{b.label}</span>}
              </div>
            ))}
            <ChevronRight size={16} strokeWidth={1} className="absolute right-[18px] top-[10px]" />
          </div>
          <div className="flex-1 flex min-h-0 pl-[4px] pb-[4px]">
            <div className="w-[1377px] flex flex-col rounded-tl-[6px] overflow-hidden">
              <div className={`h-[24px] bg-[#1d2327] flex items-center text-[10px] text-[#eeeeee] shrink-0 ${fa}`}>
                <FaWordpress size={15} className="ml-[6px] text-[#a7aaad]" />
                <FaTachometerAlt size={13} className="ml-[11px] text-[#a7aaad]" />
                <span className="ml-[6px] w-[47px] text-[9px] whitespace-nowrap">مستر فاکتور</span>
                <FaPaintBrush size={13} className="ml-[12px] text-[#a7aaad]" />
                <span className="ml-[6px]">Customize</span>
                <FaSyncAlt size={12} className="ml-[12px] text-[#a7aaad]" />
                <span className="ml-[7px]">3</span>
                <FaComment size={13} className="ml-[11px] text-[#a7aaad]" />
                <span className="ml-[5px] text-[#a7aaad]">0</span>
                <FaEnvelope size={13} className="ml-[17px] text-[#a7aaad]" />
                <span className="ml-[5px] text-[#a7aaad]">0</span>
                <FaPlus size={11} className="ml-[12px] text-[#a7aaad]" />
                <span className="ml-[6px]">New</span>
                <FaPencilAlt size={11} className="ml-[12px] text-[#a7aaad]" />
                <span className="ml-[6px]">Edit Page</span>
                <span className="ml-[12px]">WP Mail SMTP</span>
                <span className="ml-[4px] w-[13px] h-[16px] rounded-full bg-[#d63638] text-center text-[9px] leading-[16px] text-white">!</span>
                <span className="ml-[13px]">WPForms</span>
                <span className="ml-[5px] w-[13px] h-[16px] rounded-full bg-[#d63638] text-center text-[9px] leading-[16px] text-white">2</span>
                <span className="ml-auto">Howdy, rsedaaghi</span>
                <div className="ml-[4px] w-[14px] h-[18px] bg-[#6b4a38] border border-[#999999]" />
                <FaSearch size={11} className="ml-[10px] mr-[7px] text-[#a7aaad]" />
              </div>
              <div className={`h-[65px] bg-[#228bd6] flex items-center text-[11px] text-white shrink-0 ${fa}`} dir="rtl">
                <Logo className="mr-[252px] w-[28px] h-[45px]" />
                <nav className="mr-[476px] flex items-center">
                  <span>صفحه اصلی</span>
                  <span className="mr-[17px]">نرم‌افزار</span>
                  <span className="mr-[18px]">تعرفه‌ها</span>
                  <span className="mr-[15px]">منابع آموزشی ▾</span>
                  <span className="mr-[18px]">تماس با ما</span>
                  <span className="mr-[17px] flex items-center gap-[4px]"><FaUser size={10} /><span dir="ltr">▾ rsedaaghi</span></span>
                </nav>
              </div>
              <Dashboard />
              <div className="h-[5px] bg-[#228bd6] shrink-0" />
            </div>
            <div className="w-[15px] bg-white rounded-tr-[8px] rounded-br-[8px] flex flex-col items-center">
              <ChevronUp size={15} fill="#8c8c8c" className="mt-[4px] text-[#8c8c8c]" />
              <div className="mt-[3px] w-[9px] h-[509px] rounded-full bg-[#8c8c8c]" />
              <ChevronDown size={15} fill="#8c8c8c" className="mt-auto mb-[3px] text-[#8c8c8c]" />
            </div>
          </div>
        </div>
        <div className="w-[44px] flex flex-col items-center mt-[-32px] relative bg-[#3b3b3b]">
          <div className="h-[32px] w-full bg-[#202020]" />
          <div className="h-[38px] flex items-center"><Bing /></div>
          {["search", "tag", "tools", "chess", "office", "outlook", "send"].map((n) => (
            <div key={n} className="h-[40.500px] flex items-center justify-center"><RailIcon name={n} /></div>
          ))}
          <div className="h-[40px] flex items-center"><Plus size={17} strokeWidth={1} className="text-white" /></div>
          <div className="mt-auto w-[28px] h-px bg-[#5e5e5e]" />
          <div className="h-[40px] flex items-center"><PanelRight size={16} strokeWidth={1} className="text-white" /></div>
          <div className="h-[44px] flex items-center"><Settings size={17} strokeWidth={1} className="text-white" /></div>
        </div>
      </div>
    </div>
  );
}

export default function App() {
  return (
    <div className="flex w-[3360px] h-[1080px] bg-black overflow-hidden">
      <div className="w-[1920px] flex flex-col">
        <Explorer />
        <Taskbar pad="ml-[718px]">
          <div className="ml-auto flex items-center text-white text-[11px]">
            <ChevronUp size={13} />
            <span className="ml-[20px]">ENG</span>
            <MonitorSmartphone size={15} strokeWidth={1} className="ml-[17px]" />
            <Volume2 size={15} strokeWidth={1} className="ml-[8px]" />
            <div className="ml-[23px] text-right text-[11px] leading-[16px]">
              <div>11:23 AM</div>
              <div>9/25/2023</div>
            </div>
            <div className="ml-[6px] mr-[21px] w-[16px] h-[16px] rounded-full bg-[#4cc2ff] text-center text-[10px] leading-[16px] text-black">4</div>
          </div>
        </Taskbar>
      </div>
      <div className="w-[1440px] flex flex-col">
        <Browser />
        <Taskbar pad="ml-[478px]">
          <div className="ml-auto mr-[24px] text-right text-[11px] leading-[16px] text-[#e6e6e6]">
            <div>11:23 AM</div>
            <div>9/25/2023</div>
          </div>
        </Taskbar>
        <div className="flex-1 bg-black" />
      </div>
    </div>
  );
}
